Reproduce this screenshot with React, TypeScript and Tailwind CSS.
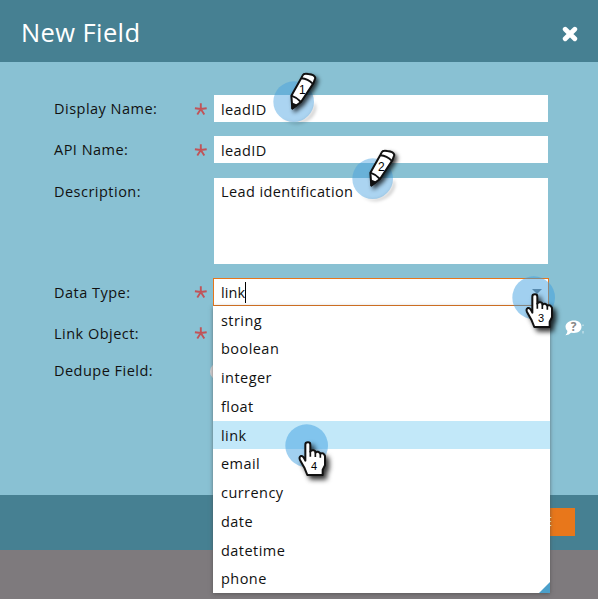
import React from "react";

const font = "font-['Open_Sans','Noto_Sans',sans-serif]";

const types = ["string", "boolean", "integer", "float", "link", "email", "currency", "date", "datetime", "phone"];

function Asterisk() {
  return (
    <svg width="13" height="13" viewBox="0 0 13 13" className="block" fill="none" stroke="#c15358" strokeWidth="1.9">
      <path d="M6.8 6V0.3M6.8 6L0.9 5.2M6.8 6L12.7 5.2M6.8 6L3.3 11.4M6.8 6L10.3 11.4" />
    </svg>
  );
}

function Row({ label, required, className, children }: { label: string; required?: boolean; className: string; children?: React.ReactNode }) {
  return (
    <div className={`flex items-start ${className}`}>
      <div className="w-[140px] text-[14.5px] leading-[27px] tracking-[0.48px]">{label}</div>
      <div className="w-[20px] pt-[8px]">{required && <Asterisk />}</div>
      {children}
    </div>
  );
}

function Pencil({ n, className }: { n: number; className: string }) {
  return (
    <svg width="90" height="75" viewBox="0 0 270 225" className={`absolute overflow-visible ${className}`}>
      <path d="M162 125A61 61 0 0 1 58 168Q105 215 155 175Q180 145 162 125Z" fill="#000" fillOpacity="0.16" className="blur-[5px]" />
      <circle cx="101" cy="125" r="61" fill="#3f9ce0" fillOpacity="0.44" />
      <g stroke="#111" strokeWidth="6" strokeLinejoin="round" className="drop-shadow-[7px_8px_6px_rgba(0,0,0,0.75)]">
        <path d="M128 46Q131 39 145 42Q164 44 166 54L160 70L123 126L97 145L94 107L124 54Z" fill="#fff" />
        <path d="M124 55Q144 57 158 71M94 107Q110 112 123 126" fill="none" />
        <path d="M97 131L109 136L97 145Z" fill="#111" />
      </g>
      <text x="127" y="101" textAnchor="middle" fontSize="36" fill="#000" className="font-['Liberation_Sans',sans-serif]">{n}</text>
    </svg>
  );
}

function Hand({ n, className }: { n: number; className: string }) {
  return (
    <svg width="80" height="75" viewBox="0 0 240 225" className={`absolute overflow-visible ${className}`}>
      <circle cx="110" cy="92" r="64" fill="#3a9ce0" fillOpacity="0.48" />
      <g className="drop-shadow-[10px_11px_8px_rgba(0,0,0,0.8)]">
        <path d="M106 137V89Q106 82 114 82Q121 82 121 89V110Q124 104 131 106Q136 107 137 113Q144 106 151 116Q160 111 165 123V151L158 164V180H112L104 160L90 135Q86 126 93 123Q99 121 106 137Z" fill="#fff" stroke="#111" strokeWidth="6" strokeLinejoin="round" />
        <path d="M121 108V125M136 111V126M151 116V128" stroke="#111" strokeWidth="5" />
      </g>
      <text x="132" y="164" textAnchor="middle" fontSize="33" fill="#000" className="font-['Liberation_Sans',sans-serif]">{n}</text>
    </svg>
  );
}

const input = "w-[334px] bg-white pl-[7px] text-[14.5px] tracking-[0.4px]";

export default function App() {
  return (
    <div className={`relative flex h-[599px] w-[598px] flex-col overflow-hidden bg-[#7e7a7d] text-[#111] ${font}`}>
      <header className="flex h-[62px] shrink-0 items-center justify-between bg-[#468092] pr-[20px] pl-[21px]">
        <h1 className="pt-px text-[25.5px] leading-8 tracking-[0.4px] text-white">New Field</h1>
        <svg width="16" height="16" viewBox="0 0 16 16" className="mt-[6px]">
          <path d="M3.2 3.2L12.8 12.8M12.8 3.2L3.2 12.8" stroke="#fff" strokeWidth="4.8" strokeLinecap="round" />
        </svg>
      </header>
      <main className="h-[433px] shrink-0 bg-[#89c1d3] pt-[33px] pl-[54px]">
        <Row label="Display Name:" required className="h-[41px]">
          <div className={`${input} h-[27px] leading-[29px]`}>leadID</div>
        </Row>
        <Row label="API Name:" required className="h-[42px]">
          <div className={`${input} h-[27px] leading-[29px]`}>leadID</div>
        </Row>
        <Row label="Description:" className="h-[100px]">
          <div className={`${input} h-[86px] leading-[27px]`}>Lead identification</div>
        </Row>
        <Row label="Data Type:" required className="h-[41px] [&>div:first-child]:pt-px">
          <div className="-ml-px flex h-[28px] w-[336px] items-center justify-between border border-[#e5761c] bg-white pr-[6px] pl-[7px] text-[14.5px]">
            <span className="border-r border-black pt-px leading-[20px] tracking-[0.1px]">link</span>
            <span className="mt-[-2px] h-0 w-0 border-x-[5px] border-t-[5px] border-x-transparent border-t-[#6f7780]" />
          </div>
        </Row>
        <Row label="Link Object:" required className="h-[38px] [&>div:first-child]:pt-px">
          <svg width="20" height="18" viewBox="0 0 20 18" className="ml-[350px] block">
            <path d="M10 1.5C14.6 1.5 17.5 4.2 17.5 7.8S14.6 14 10 14L7 13.8Q5 16.3 1.5 16.2Q3.5 14.5 3.4 12Q1.5 10.3 1.5 7.8C1.5 4.2 5.4 1.5 10 1.5Z" fill="#fff" />
            <path d="M19 5.5V7M19 12V14.5" stroke="#fff" strokeOpacity="0.7" />
            <text x="9.5" y="12" textAnchor="middle" fontSize="12" fontWeight="700" fill="#888">?</text>
          </svg>
        </Row>
        <Row label="Dedupe Field:" className="h-[28px]">
          <div className="mt-[6px] -ml-[4px] h-[17px] w-[17px] rounded-full bg-[#d9d5d7]" />
        </Row>
      </main>
      <footer className="flex h-[55px] shrink-0 items-center justify-end bg-[#468092] pr-[23px]">
        <div className="mb-px flex h-[28px] w-[75px] items-center justify-end bg-[#e8771b] pr-[23px] pb-px text-[13px] text-white">SAVE</div>
      </footer>
      <div className="absolute top-[306px] left-[213px] h-[287px] w-[337px] bg-white shadow-[0_1px_4px_rgba(70,70,70,0.65)]">
        <ul className="-mt-[0.3px]">
          {types.map((t) => (
            <li key={t} className={`h-[28.75px] pl-[8px] text-[14.5px] leading-[29px] tracking-[0.45px] ${t === "link" ? "bg-[#c2e8f9]" : ""}`}>{t}</li>
          ))}
        </ul>
        <svg width="11" height="11" className="absolute right-0 bottom-0"><path d="M11 0V11H0Z" fill="#4b9fca" /></svg>
      </div>
      <Pencil n={1} className="top-[60px] left-[260px]" />
      <Pencil n={2} className="top-[137px] left-[339px]" />
      <Hand n={3} className="top-[267px] left-[497px]" />
      <Hand n={4} className="top-[415px] left-[270px]" />
    </div>
  );
}
